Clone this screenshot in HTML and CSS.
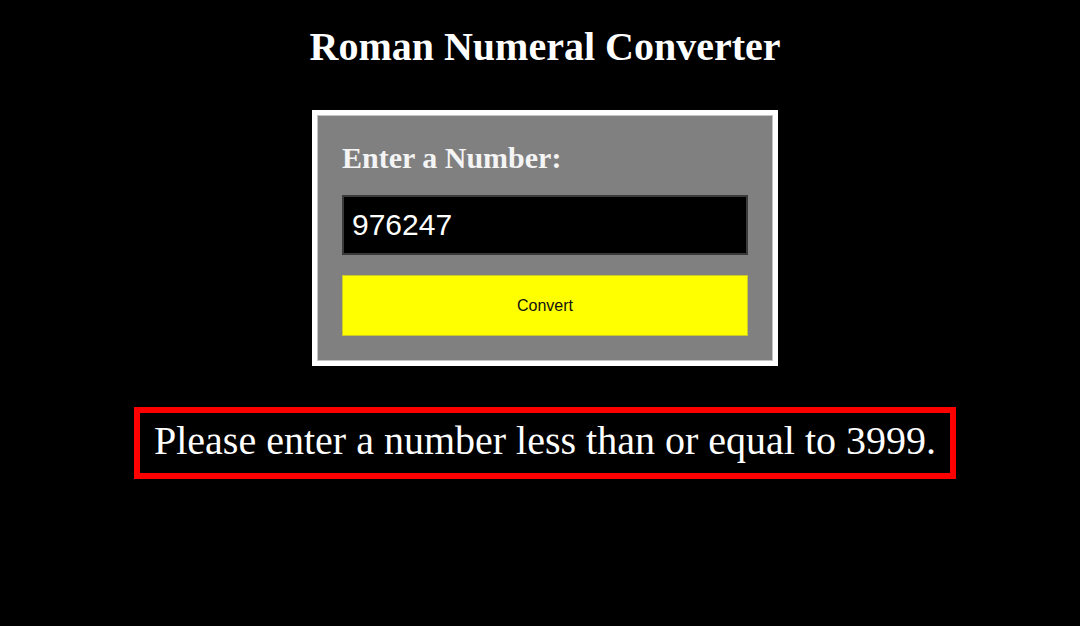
FILE: index.html
```html
<!DOCTYPE html>
<html lang="en">
<head>
<meta charset="utf-8">
<title>Roman Numeral Converter</title>
<link rel="stylesheet" href="styles.css">
</head>
<body>
<main class="page">
  <h1 class="title">Roman Numeral Converter</h1>
  <form class="card">
    <label class="label" for="number">Enter a Number:</label>
    <input class="input" id="number" type="text" value="976247">
    <button class="convert" type="button">Convert</button>
  </form>
  <div class="output">Please enter a number less than or equal to 3999.</div>
</main>
</body>
</html>
```

FILE: styles.css
```css
html, body {
  margin: 0;
  padding: 0;
  background: #000;
}

body {
  font-family: "Liberation Serif", "Times New Roman", serif;
  color: #fff;
}

.page {
  display: flex;
  flex-direction: column;
  align-items: center;
  padding-left: 10px;
}

.title {
  font-size: 40px;
  font-weight: bold;
  line-height: 46px;
  margin: 24px 0 40px;
}

.card {
  display: flex;
  flex-direction: column;
  width: 406px;
  padding: 24px 25px 25px;
  background: #808080;
  border: 5px solid #fff;
  box-shadow: inset 0 0 0 1px #c4c4c4;
}

.label {
  font-size: 30px;
  font-weight: bold;
  line-height: 34px;
  margin-top: 2px;
  color: #f4f4f4;
}

.input {
  margin-top: 20px;
  height: 60px;
  box-sizing: border-box;
  padding: 0 8px;
  background: #000;
  color: #fff;
  border: 2px solid #3a3a3a;
  font-family: "Liberation Sans", Arial, sans-serif;
  font-size: 30px;
  outline: none;
}

.convert {
  margin-top: 20px;
  height: 61px;
  background: #ff0;
  border: 1px solid #c9c92a;
  color: #111;
  font-family: "Liberation Sans", Arial, sans-serif;
  font-size: 16px;
  padding: 0;
}

.output {
  margin-top: 41px;
  border: 6px solid #f00;
  padding: 5px 14px 9px;
  font-size: 40px;
  line-height: 46px;
  color: #fff;
}
```
